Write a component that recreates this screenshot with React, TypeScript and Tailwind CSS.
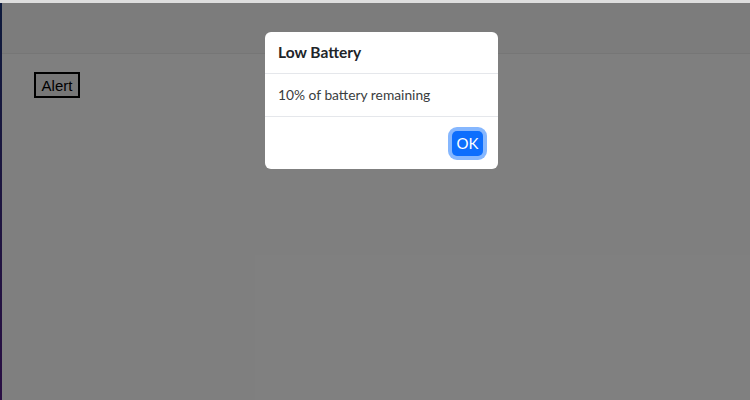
import React from "react";

const App = () => {
  return (
    <div className="w-[750px] h-[400px] flex flex-col bg-[#dedede] overflow-hidden">
      <div className="h-[3px] shrink-0" />
      <div className="flex flex-1">
        <div className="w-[2px] bg-gradient-to-b from-[#0d1a3c] to-[#2a0f44]" />
        <div className="relative flex-1 bg-white">
          <div className="h-[51px] bg-[#f8f8f8] border-b border-[#ececec]" />
          <div className="pl-[32px] pt-[18px]">
            <button className="border-2 border-black bg-[#efefef] w-[46px] h-[26px] text-[15px] leading-none text-black font-['Liberation_Sans',sans-serif]">
              Alert
            </button>
          </div>

          <div className="absolute inset-0 bg-black/50 flex justify-start pl-[263px]">
            <div className="mt-[29px] w-[233px] h-[137px] bg-white rounded-[6px] flex flex-col font-['Lato',sans-serif] text-[#212529]">
              <div className="h-[42px] shrink-0 px-[13px] flex items-center border-b border-[#e5e7eb]">
                <h5 className="text-[15.5px] font-bold">Low Battery</h5>
              </div>
              <div className="h-[43px] shrink-0 px-[13px] flex items-center border-b border-[#e5e7eb]">
                <p className="text-[13.8px] text-[#3a3d40]">10% of battery remaining</p>
              </div>
              <div className="flex-1 flex items-center justify-end pr-[15px]">
                <button className="w-[31px] h-[25px] rounded-[5px] bg-[#0d6efd] text-white text-[15px] ring-4 ring-[#86b7fe] flex items-center justify-center">
                  OK
                </button>
              </div>
            </div>
          </div>
        </div>
      </div>
    </div>
  );
};

export default App;
